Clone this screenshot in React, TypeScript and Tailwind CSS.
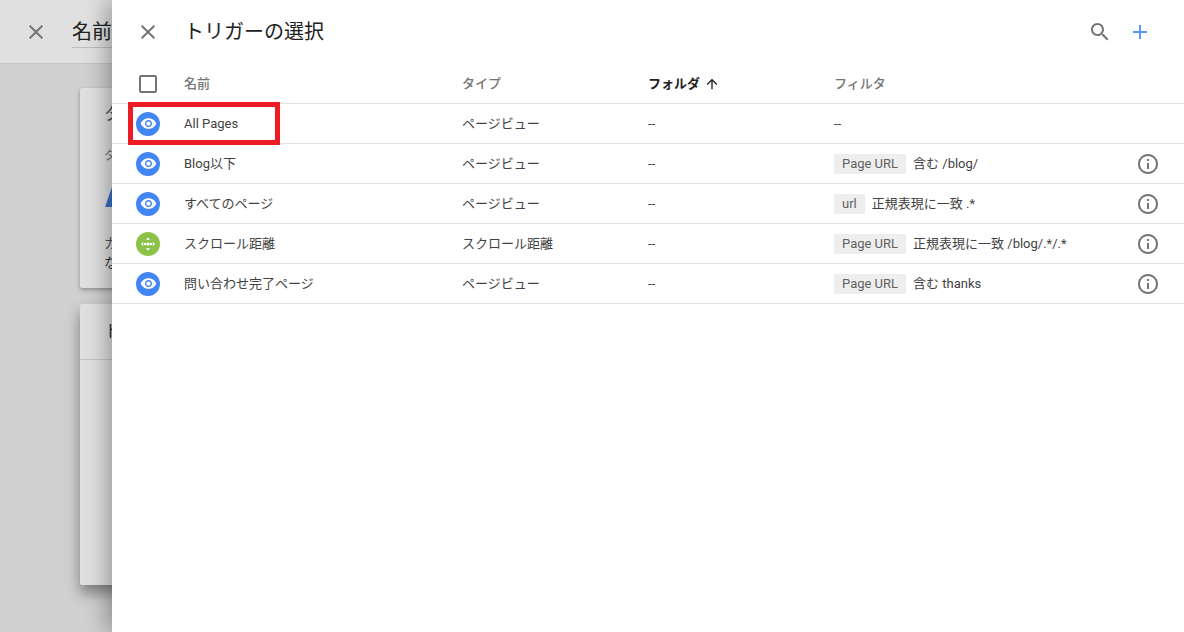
import React from 'react';

const font = { ja: 'font-["Roboto","Noto_Sans_CJK_JP",sans-serif]' };

type Row = {
  name: string;
  type: string;
  icon: 'eye' | 'scroll';
  chip?: string;
  filter?: string;
};

const rows: Row[] = [
  { name: 'All Pages', type: 'ページビュー', icon: 'eye' },
  { name: 'Blog以下', type: 'ページビュー', icon: 'eye', chip: 'Page URL', filter: '含む /blog/' },
  { name: 'すべてのページ', type: 'ページビュー', icon: 'eye', chip: 'url', filter: '正規表現に一致 .*' },
  { name: 'スクロール距離', type: 'スクロール距離', icon: 'scroll', chip: 'Page URL', filter: '正規表現に一致 /blog/.*/.*' },
  { name: '問い合わせ完了ページ', type: 'ページビュー', icon: 'eye', chip: 'Page URL', filter: '含む thanks' },
];

function CloseIcon() {
  return (
    <svg width="24" height="24" viewBox="0 0 24 24" fill="#757575">
      <path d="M19 6.41 17.59 5 12 10.59 6.41 5 5 6.41 10.59 12 5 17.59 6.41 19 12 13.41 17.59 19 19 17.59 13.41 12z" />
    </svg>
  );
}

function TriggerIcon({ kind }: { kind: Row['icon'] }) {
  if (kind === 'eye') {
    return (
      <div className="w-6 h-6 rounded-full bg-[#4285f4] flex items-center justify-center">
        <svg width="17" height="17" viewBox="0 0 24 24" fill="#fff">
          <path d="M12 4.5C7 4.5 2.73 7.61 1 12c1.73 4.39 6 7.5 11 7.5s9.27-3.11 11-7.5c-1.73-4.39-6-7.5-11-7.5zM12 17c-2.76 0-5-2.24-5-5s2.24-5 5-5 5 2.24 5 5-2.24 5-5 5zm0-8c-1.66 0-3 1.34-3 3s1.34 3 3 3 3-1.34 3-3-1.34-3-3-3z" />
        </svg>
      </div>
    );
  }
  return (
    <div className="w-6 h-6 rounded-full bg-[#8bc34a] flex items-center justify-center">
      <svg width="16" height="16" viewBox="0 0 16 16" fill="#fff">
        <path d="M8 1.500l2.200 2.300H5.800zM8 14.500l-2.200-2.300h4.400zM1 8l2.200-2.200v4.400zM15 8l-2.200 2.200V5.800z" />
        <circle cx="5.200" cy="8" r="1.300" />
        <circle cx="8" cy="8" r="1.500" />
        <circle cx="10.800" cy="8" r="1.300" />
      </svg>
    </div>
  );
}

function InfoIcon() {
  return (
    <svg width="24" height="24" viewBox="0 0 24 24" fill="#757575">
      <path d="M11 7h2v2h-2zm0 4h2v6h-2zm1-9C6.480 2 2 6.480 2 12s4.480 10 10 10 10-4.480 10-10S17.520 2 12 2zm0 18c-4.410 0-8-3.590-8-8s3.590-8 8-8 8 3.590 8 8-3.590 8-8 8z" />
    </svg>
  );
}

function Background() {
  return (
    <div className="w-[112px] shrink-0 h-full bg-[#d0d0d0] overflow-hidden">
      <div className="w-[400px] h-16 bg-[#e0e0e0] border-b border-[#c6c6c6] flex items-center pl-6 gap-6">
        <CloseIcon />
        <div className="text-[20px] text-[#212121] border-b border-[#bdbdbd] h-8 leading-8 w-[300px]">名前</div>
      </div>
      <div className="w-[500px] ml-20 mt-6 flex flex-col gap-4">
        <div className="h-[200px] bg-[#e0e0e0] rounded-[2px] shadow-[0_2px_4px_rgba(0,0,0,0.3)] pl-6 pt-4">
          <div className="text-[17px] text-[#555] leading-5">タグの設定</div>
          <div className="text-xs text-[#777] mt-6">タグの種類</div>
          <div className="ml-px mt-5 w-0 h-0 border-l-[8px] border-r-[8px] border-b-[23px] border-l-transparent border-r-transparent border-b-[#3b70c6]" />
          <div className="text-sm text-[#555] mt-[26px] leading-5">カスタム</div>
          <div className="text-sm text-[#333] leading-5">なし</div>
        </div>
        <div className="h-[281px] bg-[#e0e0e0] rounded-[2px] shadow-[0_8px_14px_rgba(0,0,0,0.4)]">
          <div className="h-[56px] border-b border-[#c6c6c6] pl-6 flex items-center text-[17px] text-[#333]">トリガー</div>
        </div>
      </div>
    </div>
  );
}

export default function App() {
  return (
    <div className={`w-[1184px] h-[632px] flex overflow-hidden bg-white ${font.ja}`}>
      <Background />
      <div className="relative flex-1 bg-white shadow-[-6px_0_20px_rgba(0,0,0,0.3)]">
        <div className="h-16 flex items-center pl-6 pr-[32px]">
          <CloseIcon />
          <h1 className="ml-6 text-[20px] text-[#212121] font-normal flex-1">トリガーの選択</h1>
          <svg width="24" height="24" viewBox="0 0 24 24" fill="#757575">
            <path d="M15.500 14h-.79l-.28-.27C15.410 12.590 16 11.110 16 9.500 16 5.910 13.090 3 9.500 3S3 5.910 3 9.500 5.910 16 9.500 16c1.610 0 3.090-.59 4.230-1.570l.27.28v.79l5 4.990L20.490 19l-4.990-5zm-6 0C7.010 14 5 11.990 5 9.500S7.010 5 9.500 5 14 7.010 14 9.500 11.990 14 9.500 14z" />
          </svg>
          <svg className="ml-4" width="24" height="24" viewBox="0 0 24 24" fill="#5b95f9">
            <path d="M19 13h-6v6h-2v-6H5v-2h6V5h2v6h6z" />
          </svg>
        </div>
        <div className="h-10 flex items-center border-b border-[#e0e0e0] text-[13px] font-medium text-[#757575]">
          <div className="w-[72px] pl-[27px]">
            <div className="w-[18px] h-[18px] border-2 border-[#757575] rounded-[2px]" />
          </div>
          <div className="w-[278px]">名前</div>
          <div className="w-[186px]">タイプ</div>
          <div className="w-[186px] flex items-center text-[#212121] font-bold">
            フォルダ
            <svg className="ml-1" width="16" height="16" viewBox="0 0 24 24" fill="#212121">
              <path d="M4 12l1.410 1.410L11 7.830V20h2V7.830l5.580 5.590L20 12l-8-8-8 8z" />
            </svg>
          </div>
          <div>フィルタ</div>
        </div>
        {rows.map((row) => (
          <div key={row.name} className="h-10 flex items-center border-b border-[#e0e0e0] text-[13px] text-[#424242]">
            <div className="w-[72px] pl-6">
              <TriggerIcon kind={row.icon} />
            </div>
            <div className="w-[278px]">{row.name}</div>
            <div className="w-[186px]">{row.type}</div>
            <div className="w-[186px]">--</div>
            <div className="flex-1 flex items-center">
              {row.chip ? (
                <>
                  <span className="h-5 leading-5 px-2 rounded-[2px] bg-[#eeeeee] text-[#616161] mr-[7px]">{row.chip}</span>
                  <span>{row.filter}</span>
                </>
              ) : (
                '--'
              )}
            </div>
            {row.chip && (
              <div className="mr-[24px]">
                <InfoIcon />
              </div>
            )}
          </div>
        ))}
        <div className="absolute left-4 top-[102px] w-[152px] h-[43px] border-[5px] border-[#ed1c24]" />
      </div>
    </div>
  );
}
